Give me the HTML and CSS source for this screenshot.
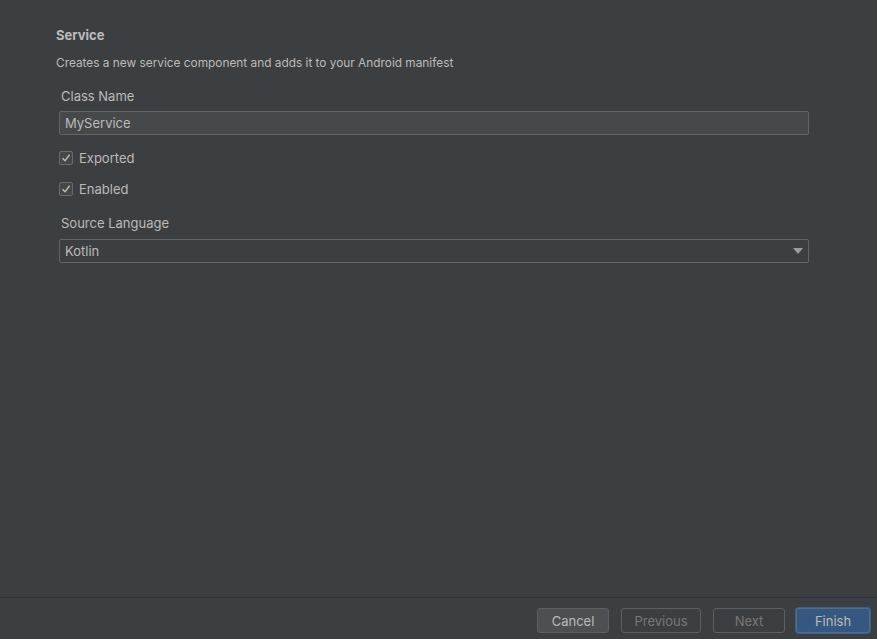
FILE: index.html
```html
<!DOCTYPE html>
<html>
	<head>
		<meta charset="utf-8">
		<title>Service</title>
		<link rel="stylesheet" href="styles.css">
	</head>
	<body>
		<div class="dialog">
			<div class="content">
				<div class="title">Service</div>
				<div class="desc">Creates a new service component and adds it to your Android manifest</div>

				<div class="label">Class Name</div>
				<div class="field">MyService</div>

				<label class="check"><span class="box">
					<svg width="10" height="10" viewBox="0 0 10 10"><path d="M1.5 5.2 L4 7.8 L8.6 1.8" fill="none" stroke="#bbbbbb" stroke-width="1.4"/></svg>
				</span>Exported</label>
				<label class="check"><span class="box">
					<svg width="10" height="10" viewBox="0 0 10 10"><path d="M1.5 5.2 L4 7.8 L8.6 1.8" fill="none" stroke="#bbbbbb" stroke-width="1.4"/></svg>
				</span>Enabled</label>

				<div class="label lang">Source Language</div>
				<div class="field combo">
					<span>Kotlin</span>
					<svg width="10" height="6" viewBox="0 0 10 6"><path d="M0 0 H10 L5 6 Z" fill="#9a9da0"/></svg>
				</div>
			</div>

			<div class="footer">
				<button class="btn">Cancel</button>
				<button class="btn off">Previous</button>
				<button class="btn off">Next</button>
				<button class="btn primary">Finish</button>
			</div>
		</div>
	</body>
</html>
```

FILE: styles.css
```css
* {
	margin: 0;
	padding: 0;
	box-sizing: border-box;
}

html, body {
	height: 100%;
}

body {
	background-color: #3c3f41;
	color: #bbbbbb;
	font-family: Inter, "Liberation Sans", sans-serif;
	font-size: 13px;
}

.dialog {
	display: flex;
	flex-direction: column;
	height: 100%;
}

.content {
	flex-grow: 1;
	padding: 27px 68px 0 56px;
}

.title {
	font-weight: bold;
	line-height: 16px;
}

.desc {
	margin-top: 12px;
	font-size: 11.85px;
	line-height: 16px;
}

.label {
	margin: 17px 0 0 5px;
	line-height: 16px;
}

.field {
	margin: 7px 0 0 3px;
	height: 24px;
	line-height: 22px;
	padding: 0 5px;
	background-color: #45494a;
	border: 1px solid #646464;
	border-radius: 2px;
}

.check {
	display: flex;
	align-items: center;
	margin: 15px 0 0 3px;
	line-height: 16px;
}

.check + .check {
	margin-top: 15px;
}

.box {
	display: flex;
	align-items: center;
	justify-content: center;
	width: 14px;
	height: 14px;
	margin-right: 6px;
	background-color: #43494a;
	border: 1px solid #6b6b6b;
	border-radius: 2px;
}

.lang {
	margin-top: 18px;
}

.combo {
	display: flex;
	align-items: center;
	justify-content: space-between;
	margin-top: 8px;
	padding-right: 5px;
	background-color: #3c3f41;
}

.footer {
	display: flex;
	justify-content: flex-end;
	gap: 12px;
	height: 42px;
	padding: 10px 7px 0 0;
	border-top: 1px solid #323232;
}

.btn {
	width: 72px;
	height: 25px;
	font-family: inherit;
	font-size: 13px;
	color: #bbbbbb;
	background-color: #4c5052;
	border: 1px solid #5e6060;
	border-radius: 3px;
}

.btn.off {
	width: 80px;
	color: #777777;
	background-color: #3c3f41;
}

.btn.off + .btn.off {
	width: 72px;
}

.btn.primary {
	width: 74px;
	margin-left: -1px;
	color: #bbbbbb;
	background-color: #365880;
	border: 1px solid #4c708c;
	box-shadow: 0 0 0 1px #3d6185;
}
```
